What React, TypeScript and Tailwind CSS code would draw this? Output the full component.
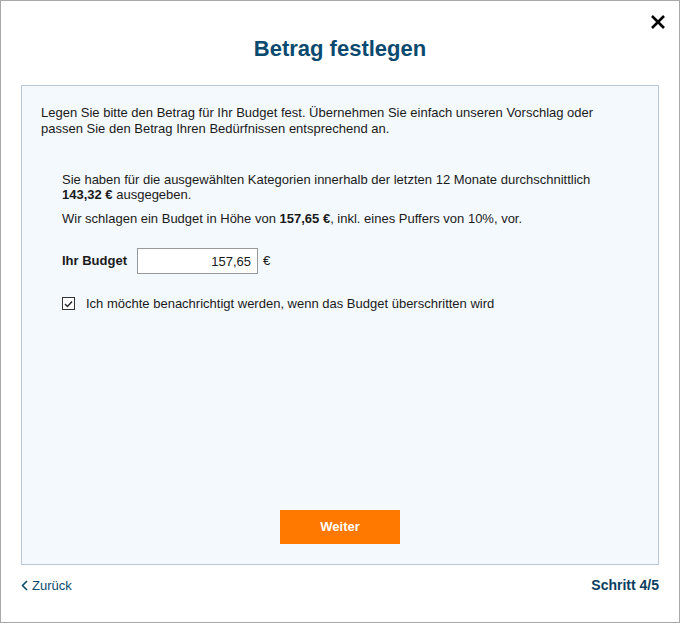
import { useState } from 'react';

export default function App() {
  const [budget, setBudget] = useState('157,65');
  const [notify, setNotify] = useState(true);

  return (
    <div
      className="relative w-[680px] h-[623px] border border-[#a8a8a8] bg-white flex flex-col text-[13px] text-[#1a1a1a]"
      style={{ fontFamily: '"Liberation Sans", Arial, sans-serif' }}
    >
      {/* close */}
      <button className="absolute right-[13px] top-[13px] w-[16px] h-[16px] flex items-center justify-center">
        <svg width="16" height="16" viewBox="0 0 16 16">
          <path d="M2 2 L14 14 M14 2 L2 14" stroke="#000" strokeWidth="2.6" strokeLinecap="butt" />
        </svg>
      </button>

      {/* header */}
      <div className="h-[84px] flex items-start justify-center pt-[34px]">
        <h1 className="text-[22px] leading-[28px] font-bold text-[#0b4a6f]">Betrag festlegen</h1>
      </div>

      {/* panel */}
      <div className="mx-[20px] h-[480px] border border-[#b9c9d9] bg-[#f4f9fd] flex flex-col px-[19px] pt-[19px] pb-[20px]">
        <p className="leading-[16px]">
          Legen Sie bitte den Betrag für Ihr Budget fest. Übernehmen Sie einfach unseren Vorschlag oder
          <br />
          passen Sie den Betrag Ihren Bedürfnissen entsprechend an.
        </p>

        <div className="pl-[21px] mt-[35px]">
          <p className="leading-[15px]">
            Sie haben für die ausgewählten Kategorien innerhalb der letzten 12 Monate durchschnittlich
            <br />
            <b>143,32 €</b> ausgegeben.
          </p>
          <p className="leading-[16px] mt-[9px]">
            Wir schlagen ein Budget in Höhe von <b>157,65 €</b>, inkl. eines Puffers von 10%, vor.
          </p>

          <div className="flex items-center mt-[21px]">
            <label className="font-bold w-[75px]">Ihr Budget</label>
            <input
              value={budget}
              onChange={(e) => setBudget(e.target.value)}
              className="w-[121px] h-[26px] border border-[#999] bg-white text-right px-[6px] text-[13px] outline-none"
            />
            <span className="ml-[5px]">€</span>
          </div>

          <label className="flex items-center mt-[20px] cursor-pointer">
            <span
              onClick={() => setNotify(!notify)}
              className="w-[13px] h-[13px] border border-[#333] bg-white flex items-center justify-center"
            >
              {notify && (
                <svg width="9" height="8" viewBox="0 0 9 8">
                  <path d="M1 4 L3.5 6.5 L8 1.5" stroke="#222" strokeWidth="1.4" fill="none" />
                </svg>
              )}
            </span>
            <span className="ml-[11px]">Ich möchte benachrichtigt werden, wenn das Budget überschritten wird</span>
          </label>
        </div>

        <div className="mt-auto flex justify-center">
          <button className="w-[120px] h-[34px] bg-[#ff7800] text-white font-bold text-[13px]">Weiter</button>
        </div>
      </div>

      {/* footer */}
      <div className="mx-[20px] mt-[10px] flex items-center justify-between">
        <a className="flex items-center gap-[4px] text-[#0b4a6f] text-[13px] cursor-pointer">
          <svg width="7" height="11" viewBox="0 0 7 11">
            <path d="M6 1 L1.5 5.5 L6 10" stroke="#0b4a6f" strokeWidth="1.6" fill="none" />
          </svg>
          Zurück
        </a>
        <span className="font-bold text-[#0b3d5e] text-[14px]">Schritt 4/5</span>
      </div>
    </div>
  );
}
